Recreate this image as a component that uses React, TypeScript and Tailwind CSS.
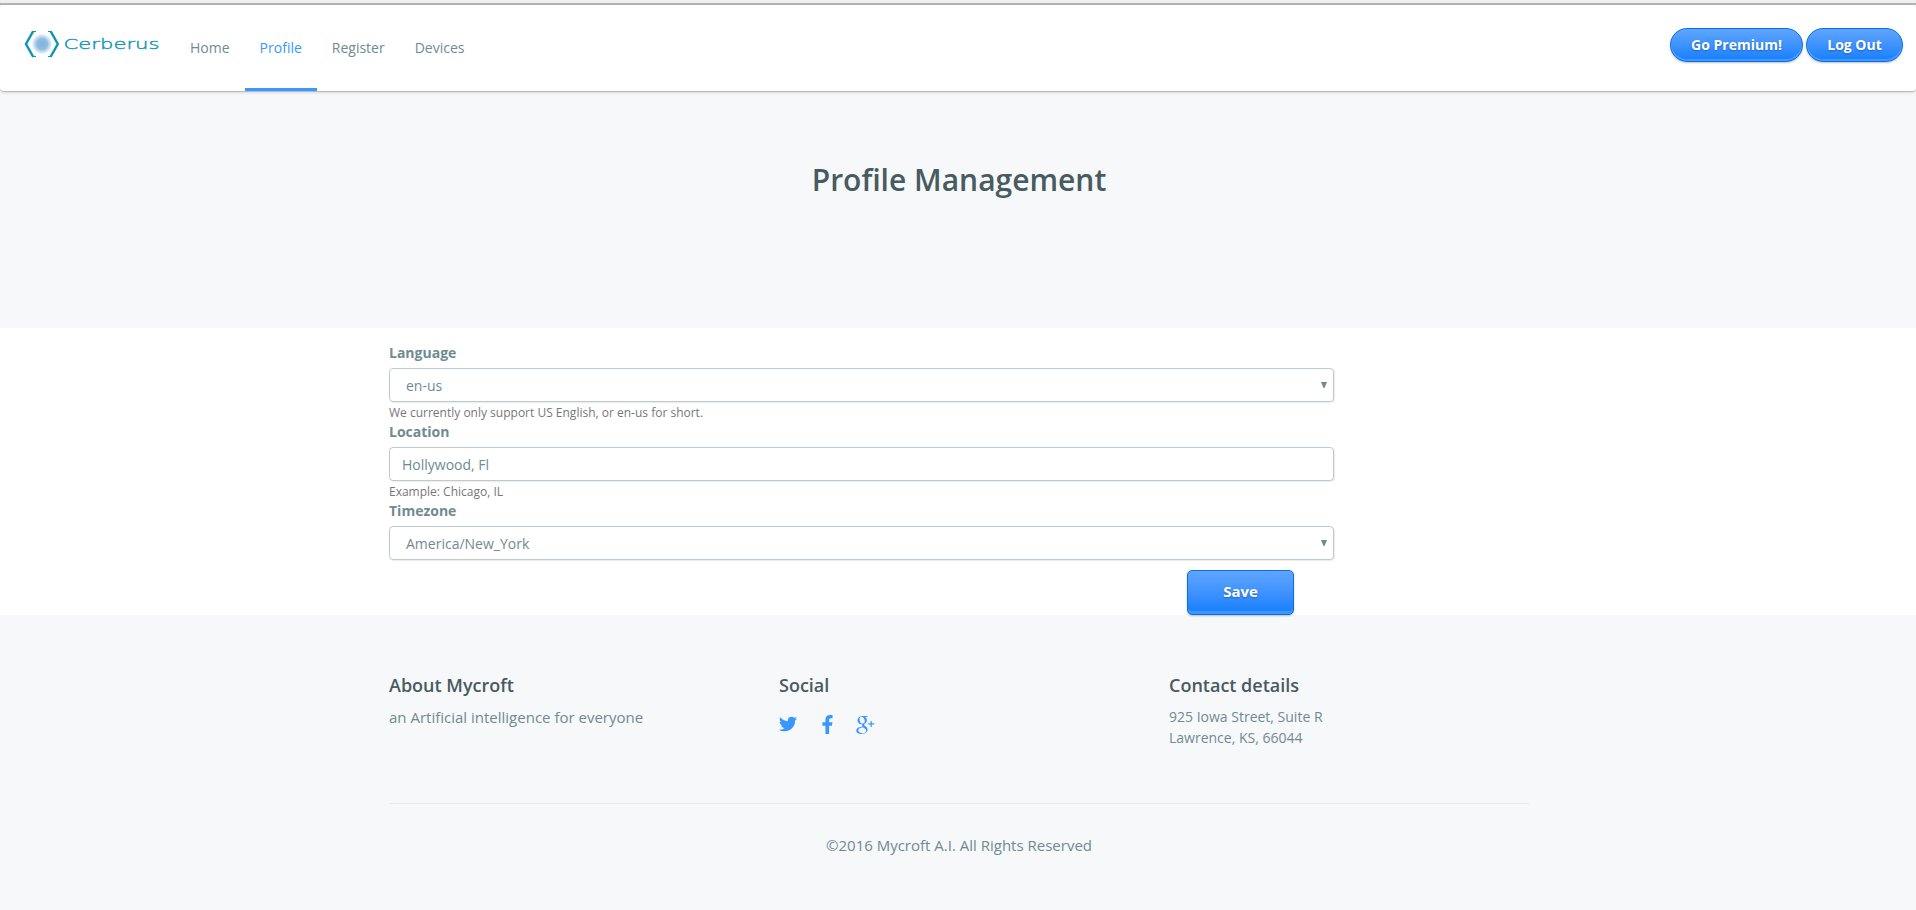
import { FaFacebookF, FaTwitter } from "react-icons/fa";
import { TiSocialGooglePlus } from "react-icons/ti";

function Logo() {
  return (
    <svg width="138" height="28" viewBox="0 0 138 28" aria-label="Cerberus">
      <defs>
        <radialGradient id="eye">
          <stop offset="0" stopColor="#7fb3de" />
          <stop offset="0.5" stopColor="#90bce3" />
          <stop offset="1" stopColor="#ffffff" />
        </radialGradient>
      </defs>
      <circle cx="18" cy="13" r="10.5" fill="url(#eye)" />
      <path d="M9.3 0 L2 13 L9.3 26 M26.5 0 L33.8 13 L26.5 26" fill="none" stroke="#0b95b5" strokeWidth="2.4" />
      <path d="M9.3 0.5H12 M9.3 25.5H12 M24 0.5H26.5 M24 25.5H26.5" stroke="#0b95b5" strokeWidth="1" />
      <text
        x="39.5"
        y="17.8"
        textLength="96"
        lengthAdjust="spacingAndGlyphs"
        fill="#1598b8"
        stroke="#1598b8"
        strokeWidth="0.4"
        fontFamily="DejaVu Sans, sans-serif"
        fontWeight="200"
        fontSize="14.5"
      >
        Cerberus
      </text>
    </svg>
  );
}

function NavItem({ label, active = false }: { label: string; active?: boolean }) {
  return (
    <a
      className={
        active
          ? "flex h-[86px] border-b-[3px] border-[#3997ff] px-[15px] pt-[33px] text-sm leading-5 text-[#3997ff]"
          : "flex h-[86px] px-[15px] pt-[33px] text-sm leading-5 text-[#708b91]"
      }
    >
      {label}
    </a>
  );
}

const pill =
  "h-[34px] rounded-full border border-[#0a6fe6] bg-linear-to-b from-[#5fa5ff] to-[#0d7eff] text-sm font-bold leading-8 text-white shadow-[0_1px_2px_rgba(0,0,0,0.25),inset_0_-2px_0_rgba(255,255,255,0.2)] [text-shadow:0_1px_2px_rgba(0,0,0,0.3)]";

const box =
  "flex h-[34px] items-center justify-between rounded-[4px] border border-[#bdcbcf] bg-white pt-[2px] text-sm leading-5 text-[#6f8b92] shadow-[1px_1px_1px_rgba(0,0,0,0.08)]";

function Arrow() {
  return (
    <svg width="6" height="6" viewBox="0 0 6 6" className="mr-[6px] mb-[2px]">
      <path d="M0 0H6L3.5 6H2.5Z" fill="#6f8b92" />
    </svg>
  );
}

function Field({ label, value, help, select = false }: { label: string; value: string; help?: string; select?: boolean }) {
  return (
    <div className="h-[79px]">
      <div className="mb-[5px] h-5 text-sm font-bold leading-5 text-[#6f8b92]">{label}</div>
      <div className={box}>
        <span className={select ? "pl-4" : "pl-3"}>{value}</span>
        {select && <Arrow />}
      </div>
      {help && <div className="pt-[2px] text-xs leading-[17px] text-[#777777]">{help}</div>}
    </div>
  );
}

export default function App() {
  return (
    <div className="h-[910px] overflow-hidden bg-[#f7f8fa] font-['Open_Sans',sans-serif] text-[#6f8b92]">
      <div className="h-[5px] border-b-2 border-[#b3b3bb] bg-[#efeff1]" />
      <header className="flex h-[87px] items-start justify-between rounded-[4px] border-b border-[#b9bbc1] bg-white pr-[13px] pl-6 shadow-[0_1px_3px_rgba(0,0,0,0.12)]">
        <div className="flex">
          <div className="w-[151px] pt-[26px]">
            <Logo />
          </div>
          <nav className="flex">
            <NavItem label="Home" />
            <NavItem label="Profile" active />
            <NavItem label="Register" />
            <NavItem label="Devices" />
          </nav>
        </div>
        <div className="flex gap-[3px] pt-[23px]">
          <button className={`${pill} w-[133px]`}>Go Premium!</button>
          <button className={`${pill} w-[97px]`}>Log Out</button>
        </div>
      </header>

      <section className="flex h-[236px] justify-center pl-[2px] pt-[66px]">
        <h1 className="text-[30px] font-semibold leading-[44px] text-[#475b61]">Profile Management</h1>
      </section>

      <section className="h-[287px] bg-white pl-[389px] pt-[15px]">
        <form className="w-[945px]">
          <Field label="Language" value="en-us" help="We currently only support US English, or en-us for short." select />
          <Field label="Location" value="Hollywood, Fl" help="Example: Chicago, IL" />
          <Field label="Timezone" value="America/New_York" select />
          <div className="-mt-[10px] flex justify-end pr-10">
            <button
              type="button"
              className="h-[45px] w-[107px] rounded-[5px] border border-[#0a6fe6] bg-linear-to-b from-[#5fa5ff] to-[#0d7eff] pb-[3px] text-[15px] font-bold leading-5 text-white shadow-[0_1px_2px_rgba(0,0,0,0.25),inset_0_-3px_0_rgba(255,255,255,0.18)] [text-shadow:0_1px_2px_rgba(0,0,0,0.3)]"
            >
              Save
            </button>
          </div>
        </form>
      </section>

      <footer className="ml-[389px] w-[1170px]">
        <div className="grid h-[188px] grid-cols-3 pt-[58px]">
          <div>
            <h3 className="text-lg font-semibold leading-6 text-[#475b61]">About Mycroft</h3>
            <p className="mt-2 text-[15px] leading-6">an Artificial intelligence for everyone</p>
          </div>
          <div>
            <h3 className="text-lg font-semibold leading-6 text-[#475b61]">Social</h3>
            <div className="mt-[14px] flex h-[26px] items-center text-[#3997ff]">
              <FaTwitter size={18} />
              <FaFacebookF size={19} className="ml-[21px]" />
              <TiSocialGooglePlus size={29} className="ml-[13px]" />
            </div>
          </div>
          <div>
            <h3 className="text-lg font-semibold leading-6 text-[#475b61]">Contact details</h3>
            <p className="mt-[9px] text-sm leading-[21px]">
              925 Iowa Street, Suite R
              <br />
              Lawrence, KS, 66044
            </p>
          </div>
        </div>
        <div className="w-[1140px] border-t border-[#e9ebed] pt-[29px] text-center text-[15px] leading-6">
          ©2016 Mycroft A.I. All Rights Reserved
        </div>
      </footer>
    </div>
  );
}
